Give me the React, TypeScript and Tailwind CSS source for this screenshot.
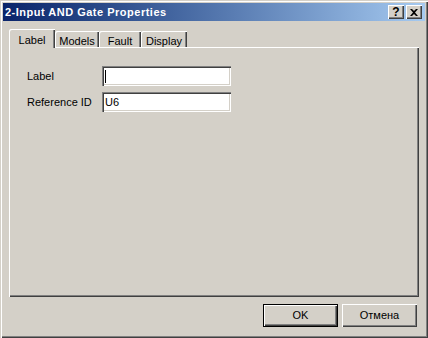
import React from "react";

const raised =
  "shadow-[inset_1px_1px_0_#ffffff,inset_-1px_-1px_0_#404040,inset_-2px_-2px_0_#808080]";
const sunken =
  "shadow-[inset_1px_1px_0_#808080,inset_2px_2px_0_#404040,inset_-1px_-1px_0_#ffffff,inset_-2px_-2px_0_#d4d0c8]";

function TitleButton({ children }: { children: React.ReactNode }) {
  return (
    <div
      className={`w-[16px] h-[14px] bg-[#d4d0c8] ${raised} flex items-center justify-center text-black text-[12px] font-bold leading-none`}
    >
      {children}
    </div>
  );
}

function Field({ label, value, caret }: { label: string; value: string; caret?: boolean }) {
  return (
    <div className="flex items-center">
      <span className="w-[75px]">{label}</span>
      <div className={`w-[129px] h-[20px] bg-white ${sunken} flex items-center pl-[3px] pt-[1px]`}>
        {caret && <span className="w-px h-[13px] bg-black" />}
        <span>{value}</span>
      </div>
    </div>
  );
}

const tabs = [
  { name: "Label", w: "w-[46px]" },
  { name: "Models", w: "w-[44px]" },
  { name: "Fault", w: "w-[42px]" },
  { name: "Display", w: "w-[46px]" },
];

export default function App() {
  return (
    <div
      className="w-[428px] h-[338px] bg-[#d4d0c8] p-[3px] text-[11px] text-black shadow-[inset_1px_1px_0_#d4d0c8,inset_2px_2px_0_#ffffff,inset_-1px_-1px_0_#404040,inset_-2px_-2px_0_#808080]"
      style={{ fontFamily: '"Liberation Sans", Arial, sans-serif' }}
    >
      {/* title bar */}
      <div className="h-[18px] flex items-center justify-between pl-[2px] pr-[3px] bg-gradient-to-r from-[#0a246a] to-[#a6caf0]">
        <span className="text-white font-bold text-[11px] tracking-[0.5px]">2-Input AND Gate Properties</span>
        <div className="flex gap-[2px]">
          <TitleButton>?</TitleButton>
          <TitleButton>
            <svg width="8" height="7" viewBox="0 0 8 7">
              <path d="M0 0h2l2 2 2-2h2L5 3.5 8 7H6L4 5 2 7H0l3-3.5z" fill="#000" />
            </svg>
          </TitleButton>
        </div>
      </div>

      {/* tabs */}
      <div className="flex items-end h-[18px] mt-[8px] ml-[6px]">
        {tabs.map((t, i) =>
          i === 0 ? (
            <div
              key={t.name}
              className={`${t.w} h-[19px] mb-[-1px] relative z-10 bg-[#d4d0c8] rounded-tl-[2px] shadow-[inset_1px_1px_0_#ffffff,inset_-1px_0_0_#404040,inset_-2px_0_0_#808080] flex items-start justify-center pt-[3px]`}
            >
              {t.name}
            </div>
          ) : (
            <div
              key={t.name}
              className={`${t.w} h-[16px] bg-[#d4d0c8] rounded-tl-[2px] shadow-[inset_1px_1px_0_#ffffff,inset_-1px_0_0_#404040,inset_-2px_0_0_#808080] flex items-start justify-center pt-[2px]`}
            >
              {t.name}
            </div>
          )
        )}
      </div>

      {/* panel */}
      <div className="ml-[6px] w-[410px] h-[250px] shadow-[inset_1px_1px_0_#ffffff,inset_-1px_-1px_0_#404040,inset_-2px_-2px_0_#808080] pt-[19px] pl-[18px] flex flex-col gap-[6px]">
        <Field label="Label" value="" caret />
        <Field label="Reference ID" value="U6" />
      </div>

      {/* buttons */}
      <div className="flex justify-end gap-[4px] mt-[7px] pr-[8px]">
        <div className="w-[75px] h-[23px] border border-black">
          <div className={`w-full h-full ${raised} flex items-center justify-center`}>OK</div>
        </div>
        <div className={`w-[75px] h-[23px] ${raised} flex items-center justify-center`}>Отмена</div>
      </div>
    </div>
  );
}
